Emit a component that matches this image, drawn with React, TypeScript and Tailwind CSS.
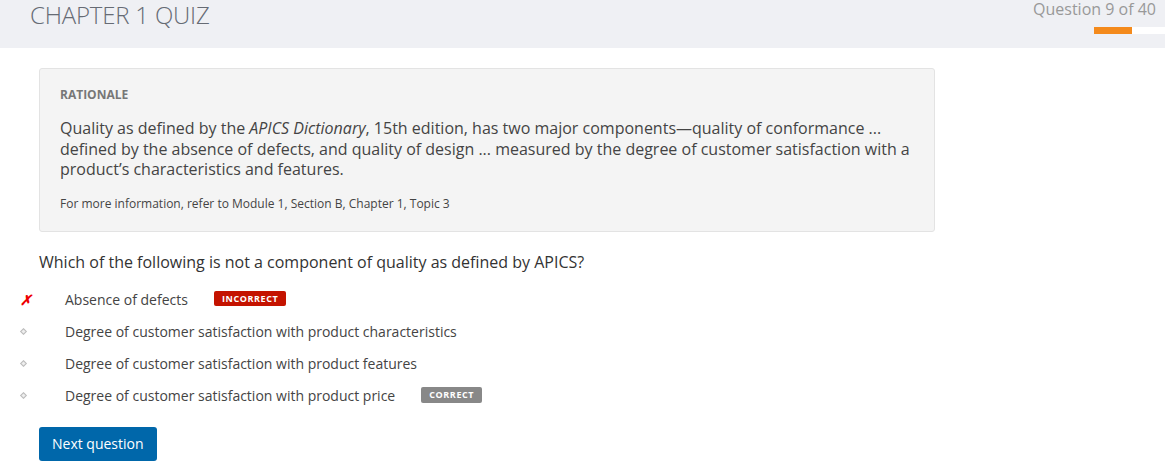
export default function App() {
  const options = [
    { text: "Absence of defects", mark: "wrong", badge: "INCORRECT" },
    { text: "Degree of customer satisfaction with product characteristics" },
    { text: "Degree of customer satisfaction with product features" },
    { text: "Degree of customer satisfaction with product price", badge: "CORRECT" },
  ];

  return (
    <div className="min-h-screen bg-white text-[#444] font-['Open_Sans',sans-serif]">
      {/* Header */}
      <header className="h-[48px] bg-[#eff0f4] flex justify-between">
        <h1 className="pl-[30px] text-[24px] leading-[30px] font-light text-[#666b74] tracking-[-0.2px]">
          CHAPTER 1 QUIZ
        </h1>
        <div className="flex flex-col items-end">
          <div className="pr-[9px] text-[16px] leading-[18px] text-[#999]">Question 9 of 40</div>
          <div className="mt-[9px] w-[71px] h-[7px] bg-white flex">
            <div className="w-[38px] h-full bg-[#f48a1c]" />
          </div>
        </div>
      </header>

      <main className="pl-[39px] pt-[20px]">
        {/* Rationale */}
        <section className="w-[896px] bg-[#f4f4f4] border border-[#e3e3e3] rounded-[3px] px-[20px] pt-[18px] pb-[19px]">
          <h2 className="text-[12px] leading-[16px] font-bold text-[#777]">RATIONALE</h2>
          <p className="mt-[15px] text-[16px] leading-[20.5px] text-[#444]">
            Quality as defined by the <em>APICS Dictionary</em>, 15th edition, has two major components—quality of conformance ... defined by the absence of defects, and quality of design ... measured by the degree of customer satisfaction with a product’s characteristics and features.
          </p>
          <p className="mt-[16px] text-[12px] leading-[16px] text-[#444]">
            For more information, refer to Module 1, Section B, Chapter 1, Topic 3
          </p>
        </section>

        <p className="mt-[19px] text-[16px] leading-[22px] text-[#333]">
          Which of the following is not a component of quality as defined by APICS?
        </p>

        <ul className="mt-[11px] -ml-[18px]">
          {options.map((o) => (
            <li key={o.text} className="h-[32px] flex items-center">
              <span className="w-[44px] flex items-center">
                {o.mark === "wrong" ? (
                  <span className="-ml-[1px] text-[#e00] font-bold italic text-[14px] leading-none">✗</span>
                ) : (
                  <span className="w-[5px] h-[5px] rotate-45 border border-[#bbb] bg-[#eee]" />
                )}
              </span>
              <span className="text-[14px] text-[#444]">{o.text}</span>
              {o.badge === "INCORRECT" && (
                <span className="ml-[26px] h-[15px] px-[8px] rounded-[2px] bg-[#c41300] text-white text-[9px] font-bold tracking-[0.6px] leading-[15px] mb-[2px]">
                  INCORRECT
                </span>
              )}
              {o.badge === "CORRECT" && (
                <span className="ml-[26px] h-[16px] px-[8px] rounded-[2px] bg-[#888] text-white text-[9px] font-bold tracking-[0.6px] leading-[16px] mb-[2px]">
                  CORRECT
                </span>
              )}
            </li>
          ))}
        </ul>

        <button className="mt-[15px] h-[34px] px-[13px] rounded-[3px] bg-[#0067aa] text-white text-[14px]">
          Next question
        </button>
      </main>
    </div>
  );
}
